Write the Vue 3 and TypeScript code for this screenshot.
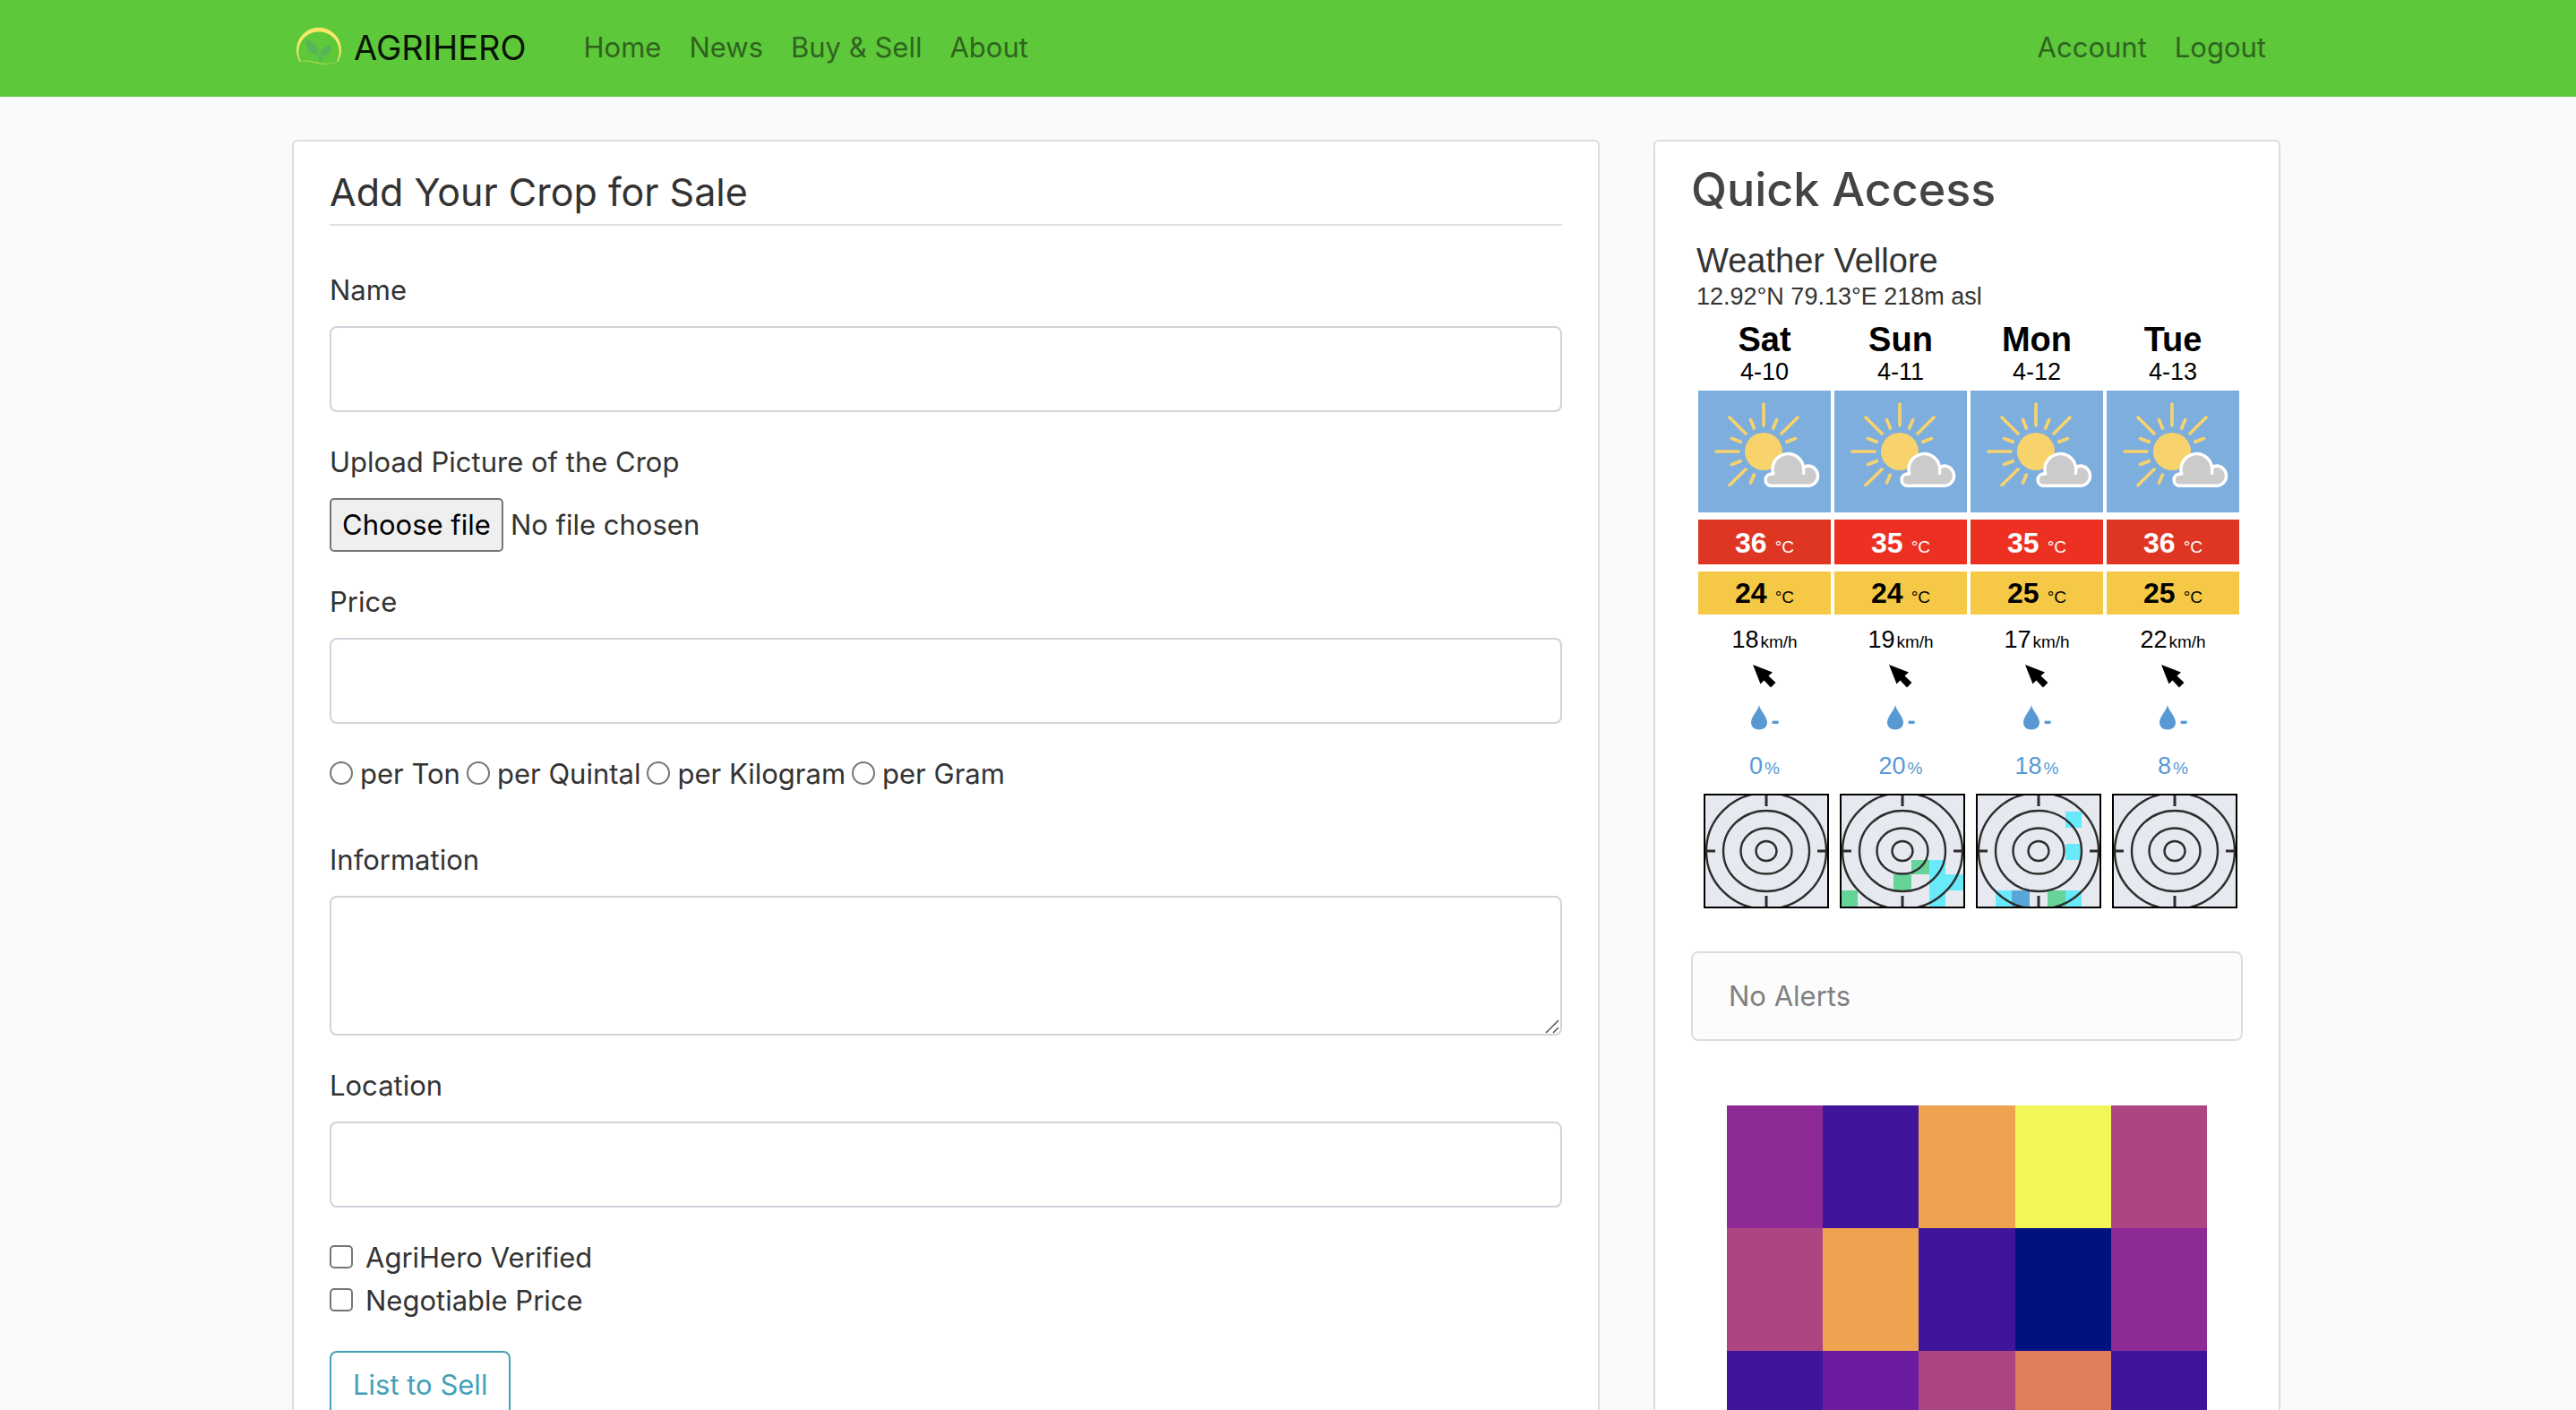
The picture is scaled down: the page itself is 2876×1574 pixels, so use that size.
<script setup lang="ts">
import { ref } from 'vue'

interface RadarCell {
  x: number
  y: number
  w: number
  h: number
  fill: string
}

interface ForecastDay {
  day: string
  date: string
  high: number
  highColor: string
  low: number
  wind: number
  chance: number
  radar: RadarCell[]
}

const GREEN = '#66d398'
const CYAN = '#69eafa'
const BLUE = '#57a6d7'

const navLinks: string[] = ['Home', 'News', 'Buy & Sell', 'About']
const userLinks: string[] = ['Account', 'Logout']
const units: string[] = ['per Ton', 'per Quintal', 'per Kilogram', 'per Gram']
const flags: string[] = ['AgriHero Verified', 'Negotiable Price']

const forecast: ForecastDay[] = [
  { day: 'Sat', date: '4-10', high: 36, highColor: '#df3623', low: 24, wind: 18, chance: 0, radar: [] },
  {
    day: 'Sun', date: '4-11', high: 35, highColor: '#ec3123', low: 24, wind: 19, chance: 20,
    radar: [
      { x: 0, y: 106, w: 18, h: 18, fill: GREEN },
      { x: 58, y: 88, w: 20, h: 18, fill: GREEN },
      { x: 78, y: 72, w: 20, h: 16, fill: GREEN },
      { x: 98, y: 72, w: 18, h: 52, fill: CYAN },
      { x: 116, y: 88, w: 20, h: 18, fill: CYAN },
    ],
  },
  {
    day: 'Mon', date: '4-12', high: 35, highColor: '#ec3123', low: 25, wind: 17, chance: 18,
    radar: [
      { x: 98, y: 18, w: 18, h: 18, fill: CYAN },
      { x: 98, y: 54, w: 18, h: 18, fill: CYAN },
      { x: 20, y: 106, w: 18, h: 18, fill: CYAN },
      { x: 38, y: 106, w: 20, h: 18, fill: BLUE },
      { x: 78, y: 106, w: 20, h: 18, fill: GREEN },
      { x: 98, y: 106, w: 18, h: 18, fill: CYAN },
    ],
  },
  { day: 'Tue', date: '4-13', high: 36, highColor: '#df3623', low: 25, wind: 22, chance: 8, radar: [] },
]

const heatmap: string[] = [
  '#8e2a96', '#3f169a', '#efa351', '#f3f658', '#ad4583',
  '#ad4583', '#efa351', '#3f169a', '#001180', '#8e2a96',
  '#3f169a', '#6a1ba0', '#ad4583', '#df7e5d', '#3f169a',
]

const fileInput = ref<HTMLInputElement | null>(null)
const fileName = ref('No file chosen')

function pickFile(): void {
  fileInput.value?.click()
}

function onFile(event: Event): void {
  const files = (event.target as HTMLInputElement).files
  fileName.value = files && files.length ? files[0].name : 'No file chosen'
}
</script>

<template>
  <div class="page">
    <header class="navbar">
      <nav class="container nav-inner">
        <a class="brand" href="#">
          <svg class="logo" viewBox="0 0 60 60" aria-hidden="true">
            <path d="M8.500 46A24.500 24.500 0 1 1 49.500 46A23.200 23.200 0 1 0 8.500 46Z" fill="#fbe86a" stroke="#fbe86a" stroke-width="0.800" />
            <path d="M4 46C15 43 22 45 30 47S43 48 51 45C42 50 34 50 27 48S13 45 4 46Z" fill="#9bd44b" />
            <path d="M15 21C25 26 29 29 28 38C19 38 15 33 15 21Z" fill="#57b558" />
            <path d="M43.500 27C34 29 29 33 31 40C39 40 42 36 43.500 27Z" fill="#57b558" />
            <path d="M24 33C28 36 30 40 30 46C31 41 33 37 38 33" fill="none" stroke="#57b558" stroke-width="2" />
          </svg>
          <span>AGRIHERO</span>
        </a>
        <div class="nav-links">
          <a v-for="link in navLinks" :key="link" href="#">{{ link }}</a>
        </div>
        <div class="nav-links user-links">
          <a v-for="link in userLinks" :key="link" href="#">{{ link }}</a>
        </div>
      </nav>
    </header>

    <main class="container columns">
      <section class="card">
        <form @submit.prevent>
          <h1 class="form-title">Add Your Crop for Sale</h1>

          <div class="group">
            <label class="field-label" for="name">Name</label>
            <input id="name" class="control" type="text" />
          </div>

          <div class="group">
            <label class="field-label" for="picture">Upload Picture of the Crop</label>
            <div class="file-row">
              <input id="picture" ref="fileInput" class="file-native" type="file" tabindex="-1" @change="onFile" />
              <button class="file-button" type="button" @click="pickFile">Choose file</button>
              <span>{{ fileName }}</span>
            </div>
          </div>

          <div class="group">
            <label class="field-label" for="price">Price</label>
            <input id="price" class="control" type="text" />
          </div>

          <div class="units">
            <label v-for="unit in units" :key="unit" class="unit">
              <input class="radio" type="radio" name="unit" :value="unit" />
              <span>{{ unit }}</span>
            </label>
          </div>

          <div class="group">
            <label class="field-label" for="information">Information</label>
            <div class="area-wrap">
              <textarea id="information" class="control area"></textarea>
              <svg class="grip" viewBox="0 0 16 16" aria-hidden="true">
                <path d="M1 15L15 1M9 15L15 9" stroke="#555" stroke-width="1.500" />
              </svg>
            </div>
          </div>

          <div class="group">
            <label class="field-label" for="location">Location</label>
            <input id="location" class="control" type="text" />
          </div>

          <div class="group">
            <label v-for="flag in flags" :key="flag" class="flag">
              <input class="checkbox" type="checkbox" />
              <span>{{ flag }}</span>
            </label>
          </div>

          <button class="submit" type="submit">List to Sell</button>
        </form>
      </section>

      <aside class="card">
        <h2 class="side-title">Quick Access</h2>

        <div class="weather">
          <div class="place">Weather Vellore</div>
          <div class="coords">12.92°N 79.13°E 218m asl</div>
          <table class="forecast">
            <thead>
              <tr>
                <th v-for="d in forecast" :key="d.day" scope="col">
                  <div class="day">{{ d.day }}</div>
                  <div class="date">{{ d.date }}</div>
                </th>
              </tr>
            </thead>
            <tbody>
              <tr>
                <td v-for="d in forecast" :key="d.day">
                  <svg class="sky" viewBox="0 0 148 136" role="img" aria-label="Partly cloudy">
                    <rect width="148" height="136" fill="#7daedd" />
                    <circle cx="73" cy="68" r="21" fill="#f8d36c" />
                    <path
                      d="M73 15V39M20 68H45M35 30L53 48M111 30L93 48M35 105.500L53 88M58.500 32.500L62.300 42M87.700 32.500L83.700 42M37.500 53.500L47.300 57.300M108.500 53.500L98.700 57.300M37.500 82.500L47.300 78.700M58.500 103L62.300 94"
                      stroke="#f8d36c" stroke-width="3.600" stroke-linecap="round"
                    />
                    <g stroke="#fff" stroke-width="3.400" stroke-linecap="round" stroke-linejoin="round">
                      <path d="M81 106.300A6.700 6.700 0 0 1 81 93H83.800C83 91 83 90 83 88A17.300 17.300 0 0 1 117.500 86C119 84.800 121 84 123.400 84A11.200 11.200 0 0 1 123.400 106.300Z" fill="#cbcbcb" />
                      <path d="M117.500 86Q118 89 117.500 92.500" fill="none" />
                    </g>
                  </svg>
                </td>
              </tr>
              <tr>
                <td v-for="d in forecast" :key="d.day">
                  <div class="temp high" :style="{ background: d.highColor }"><b>{{ d.high }}</b><small>°C</small></div>
                </td>
              </tr>
              <tr>
                <td v-for="d in forecast" :key="d.day">
                  <div class="temp low"><b>{{ d.low }}</b><small>°C</small></div>
                </td>
              </tr>
              <tr>
                <td v-for="d in forecast" :key="d.day">
                  <div class="wind"><span>{{ d.wind }}</span><small>km/h</small></div>
                </td>
              </tr>
              <tr>
                <td v-for="d in forecast" :key="d.day">
                  <div class="direction">
                    <svg width="26" height="26" viewBox="0 0 26 26" role="img" aria-label="Wind towards north-west">
                      <path d="M0 0L22 8.500L17.500 12.500L25.500 20L20 25.500L12.500 17.500L8.500 21.500Z" fill="#000" />
                    </svg>
                  </div>
                </td>
              </tr>
              <tr>
                <td v-for="d in forecast" :key="d.day">
                  <div class="rain">
                    <svg width="20" height="28" viewBox="0 0 20 28" aria-hidden="true">
                      <path d="M10 0C11 6 19 13 19 19.500C19 24.500 15 27.500 10 27.500S1 24.500 1 19.500C1 13 9 6 10 0Z" fill="#5899d3" />
                    </svg>
                    <b>-</b>
                  </div>
                </td>
              </tr>
              <tr>
                <td v-for="d in forecast" :key="d.day">
                  <div class="chance"><span>{{ d.chance }}</span><small>%</small></div>
                </td>
              </tr>
              <tr>
                <td v-for="d in forecast" :key="d.day">
                  <div class="radar">
                    <svg viewBox="0 0 136 124" role="img" aria-label="Rain radar">
                      <rect width="136" height="124" fill="#e6e9ef" />
                      <rect v-for="(c, i) in d.radar" :key="i" :x="c.x" :y="c.y" :width="c.w" :height="c.h" :fill="c.fill" />
                      <g fill="none" stroke="#2d2d2d" stroke-width="2.400">
                        <ellipse cx="68" cy="62" rx="11.500" ry="11" />
                        <ellipse cx="68" cy="62" rx="28.500" ry="25.500" />
                        <ellipse cx="68" cy="62" rx="48" ry="45" />
                        <ellipse cx="68" cy="62" rx="67" ry="65" />
                        <path d="M68 0V12M68 112V124M0 62H11M125 62H136" stroke-width="3" />
                      </g>
                    </svg>
                  </div>
                </td>
              </tr>
            </tbody>
          </table>
        </div>

        <div class="alert">No Alerts</div>

        <div class="heatmap" role="img" aria-label="Field heatmap">
          <span v-for="(color, i) in heatmap" :key="i" :style="{ background: color }"></span>
        </div>
      </aside>
    </main>
  </div>
</template>

<style>
html,
body {
  height: 100%;
  margin: 0;
  background: #fafafa;
}
body {
  overflow-x: hidden;
}
body::-webkit-scrollbar {
  display: none;
}
</style>

<style scoped>
* {
  box-sizing: border-box;
}
.page {
  padding-right: 4px;
  background: #fafafa;
  color: #333;
  font-family: Inter, 'Liberation Sans', sans-serif;
  font-size: 31px;
  line-height: 48px;
}
.navbar {
  margin-right: -4px;
  padding: 13px 4px 15px 0;
  background: #5ec83b;
}
.container {
  width: calc(100% - 60px);
  max-width: 2220px;
  margin: 0 auto;
}
.nav-inner {
  display: flex;
  align-items: center;
  height: 80px;
}
.brand {
  display: flex;
  align-items: center;
  gap: 8px;
  margin-right: 64px;
  padding-left: 1px;
  color: #091405;
  font-size: 38px;
  line-height: 60px;
  text-decoration: none;
}
.logo {
  width: 60px;
  height: 60px;
}
.nav-links {
  display: flex;
  gap: 31px;
}
.nav-links a {
  color: #2f641e;
  text-decoration: none;
}
.user-links {
  margin-left: auto;
  padding-right: 16px;
}
.columns {
  display: grid;
  grid-template-columns: 73fr 35fr;
  gap: 60px;
  padding: 48px 0 32px;
}
.card {
  min-width: 0;
  padding: 20px 40px 40px;
  border: 2px solid #ddd;
  border-radius: 6px;
  background: #fff;
}
.form-title {
  margin: 0 0 48px;
  border-bottom: 2px solid #dee2e6;
  font-size: 43px;
  font-weight: 400;
  line-height: 72px;
}
.group {
  margin-bottom: 32px;
}
.field-label {
  display: block;
  margin-bottom: 16px;
}
.control {
  display: block;
  width: 100%;
  height: 96px;
  padding: 12px 24px;
  border: 2px solid #ced4da;
  border-radius: 8px;
  background: #fff;
  color: #495057;
  font: inherit;
}
.area-wrap {
  position: relative;
}
.area {
  height: 156px;
  resize: none;
}
.grip {
  position: absolute;
  right: 3px;
  bottom: 2px;
  width: 16px;
  height: 16px;
}
.file-row {
  display: flex;
  align-items: center;
  gap: 8px;
}
.file-native {
  position: absolute;
  width: 1px;
  height: 1px;
  opacity: 0;
}
.file-button {
  height: 60px;
  padding: 0 12px;
  border: 2px solid #767676;
  border-radius: 5px;
  background: #efefef;
  color: #000;
  font: inherit;
}
.units {
  display: flex;
  gap: 7px;
  margin-bottom: 48px;
}
.unit,
.flag {
  display: flex;
  align-items: center;
  gap: 8px;
}
.flag {
  gap: 14px;
}
.radio,
.checkbox {
  flex: none;
  width: 26px;
  height: 26px;
  margin: 0 0 2px;
  border: 2px solid #767676;
  border-radius: 5px;
  background: #fff;
  appearance: none;
}
.radio {
  border-radius: 50%;
}
.radio:checked,
.checkbox:checked {
  box-shadow: inset 0 0 0 4px #fff;
  background: #0075ff;
}
.submit {
  padding: 12px 24px;
  border: 2px solid #45a0b8;
  border-radius: 8px;
  background: transparent;
  color: #45a0b8;
  font: inherit;
}
.side-title {
  margin: 0 0 24px;
  color: #444;
  font-size: 52px;
  font-weight: 500;
  line-height: 67px;
}
.weather {
  margin-bottom: 48px;
  padding-left: 4px;
  font-family: 'Liberation Sans', Arial, sans-serif;
  font-size: 27px;
}
.place {
  padding-left: 2px;
  font-size: 38px;
  line-height: 44px;
}
.coords {
  padding-left: 2px;
  margin-bottom: 8px;
  line-height: 36px;
}
.forecast {
  width: 100%;
  table-layout: fixed;
  border-collapse: separate;
  border-spacing: 4px 0;
  color: #000;
  text-align: center;
}
.forecast th,
.forecast td {
  padding: 0;
  vertical-align: top;
}
.forecast small {
  font-size: 19px;
}
.day {
  font-size: 38px;
  line-height: 44px;
}
.date {
  margin-bottom: 7px;
  font-weight: 400;
  line-height: 28px;
}
.sky {
  display: block;
  width: 100%;
  margin-bottom: 8px;
}
.temp {
  display: flex;
  justify-content: center;
  align-items: baseline;
  gap: 9px;
  font-size: 32px;
  line-height: 44px;
}
.high {
  height: 50px;
  margin-bottom: 8px;
  padding-top: 4px;
  color: #fff;
}
.low {
  height: 48px;
  padding-top: 2px;
  background: #f5c946;
}
.wind,
.chance {
  display: flex;
  justify-content: center;
  align-items: baseline;
  gap: 2px;
  height: 56px;
  line-height: 56px;
}
.direction {
  display: flex;
  justify-content: center;
  height: 45px;
}
.rain {
  display: flex;
  justify-content: center;
  gap: 4px;
  height: 45px;
  color: #5899d3;
  line-height: 36px;
}
.chance {
  height: 46px;
  color: #5899d3;
  line-height: 46px;
}
.radar {
  margin: 8px 2px 0 6px;
  border: 2px solid #000;
}
.radar svg {
  display: block;
  width: 100%;
}
.alert {
  margin-bottom: 72px;
  padding: 24px 40px;
  border: 2px solid #ddd;
  border-radius: 8px;
  background: #fcfcfc;
  color: #808080;
}
.heatmap {
  display: grid;
  grid-template-columns: repeat(5, 1fr);
  grid-auto-rows: 137px;
  margin: 0 40px;
}
</style>
